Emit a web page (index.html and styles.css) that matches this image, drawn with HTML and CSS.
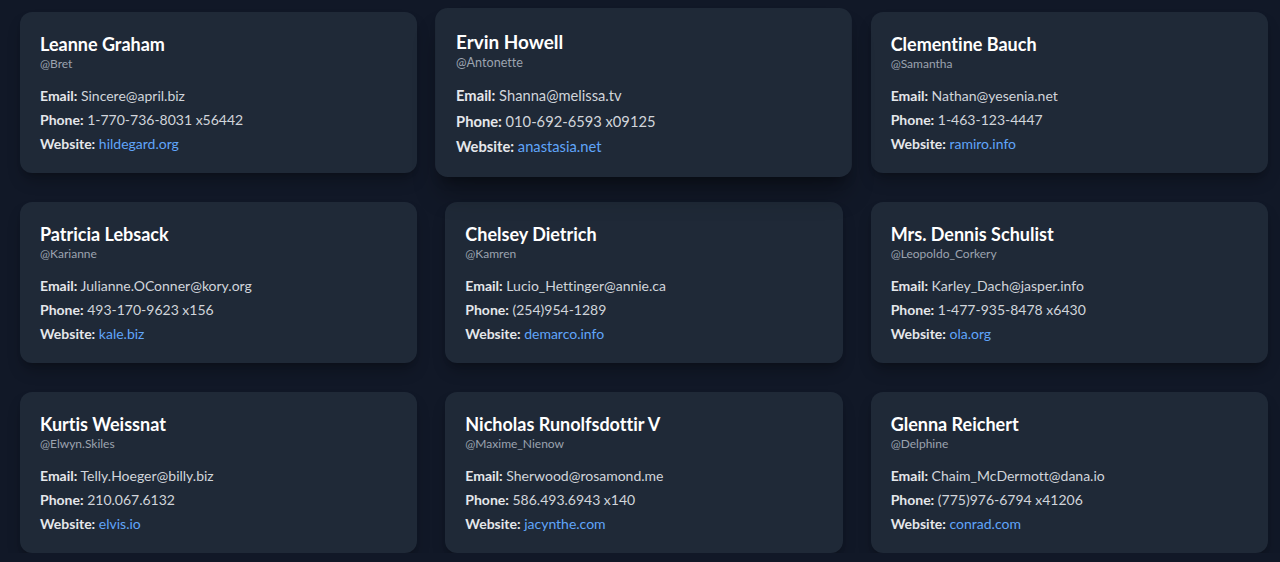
FILE: index.html
```html
<!DOCTYPE html>
<html lang="en">
<head>
<meta charset="utf-8">
<title>Users</title>
<link rel="stylesheet" href="styles.css">
</head>
<body>
<main class="grid">
  <article class="card">
    <h2 class="name">Leanne Graham</h2>
    <p class="user">@Bret</p>
    <div class="info">
      <p><b>Email:</b> Sincere@april.biz</p>
      <p><b>Phone:</b> 1-770-736-8031 x56442</p>
      <p><b>Website:</b> <a href="#">hildegard.org</a></p>
    </div>
  </article>
  <article class="card hovered">
    <h2 class="name">Ervin Howell</h2>
    <p class="user">@Antonette</p>
    <div class="info">
      <p><b>Email:</b> Shanna@melissa.tv</p>
      <p><b>Phone:</b> 010-692-6593 x09125</p>
      <p><b>Website:</b> <a href="#">anastasia.net</a></p>
    </div>
  </article>
  <article class="card">
    <h2 class="name">Clementine Bauch</h2>
    <p class="user">@Samantha</p>
    <div class="info">
      <p><b>Email:</b> Nathan@yesenia.net</p>
      <p><b>Phone:</b> 1-463-123-4447</p>
      <p><b>Website:</b> <a href="#">ramiro.info</a></p>
    </div>
  </article>
  <article class="card">
    <h2 class="name">Patricia Lebsack</h2>
    <p class="user">@Karianne</p>
    <div class="info">
      <p><b>Email:</b> Julianne.OConner@kory.org</p>
      <p><b>Phone:</b> 493-170-9623 x156</p>
      <p><b>Website:</b> <a href="#">kale.biz</a></p>
    </div>
  </article>
  <article class="card">
    <h2 class="name">Chelsey Dietrich</h2>
    <p class="user">@Kamren</p>
    <div class="info">
      <p><b>Email:</b> Lucio_Hettinger@annie.ca</p>
      <p><b>Phone:</b> (254)954-1289</p>
      <p><b>Website:</b> <a href="#">demarco.info</a></p>
    </div>
  </article>
  <article class="card">
    <h2 class="name">Mrs. Dennis Schulist</h2>
    <p class="user">@Leopoldo_Corkery</p>
    <div class="info">
      <p><b>Email:</b> Karley_Dach@jasper.info</p>
      <p><b>Phone:</b> 1-477-935-8478 x6430</p>
      <p><b>Website:</b> <a href="#">ola.org</a></p>
    </div>
  </article>
  <article class="card">
    <h2 class="name">Kurtis Weissnat</h2>
    <p class="user">@Elwyn.Skiles</p>
    <div class="info">
      <p><b>Email:</b> Telly.Hoeger@billy.biz</p>
      <p><b>Phone:</b> 210.067.6132</p>
      <p><b>Website:</b> <a href="#">elvis.io</a></p>
    </div>
  </article>
  <article class="card">
    <h2 class="name">Nicholas Runolfsdottir V</h2>
    <p class="user">@Maxime_Nienow</p>
    <div class="info">
      <p><b>Email:</b> Sherwood@rosamond.me</p>
      <p><b>Phone:</b> 586.493.6943 x140</p>
      <p><b>Website:</b> <a href="#">jacynthe.com</a></p>
    </div>
  </article>
  <article class="card">
    <h2 class="name">Glenna Reichert</h2>
    <p class="user">@Delphine</p>
    <div class="info">
      <p><b>Email:</b> Chaim_McDermott@dana.io</p>
      <p><b>Phone:</b> (775)976-6794 x41206</p>
      <p><b>Website:</b> <a href="#">conrad.com</a></p>
    </div>
  </article>
</main>
</body>
</html>
```
FILE: styles.css
```css
html, body {
  margin: 0;
  padding: 0;
  background: #111827;
  overflow: hidden;
}
body {
  font-family: "Lato", "Noto Sans", sans-serif;
  font-variant-ligatures: no-common-ligatures;
  color: #d1d5db;
}
.grid {
  display: grid;
  grid-template-columns: repeat(3, 1fr);
  column-gap: 28px;
  row-gap: 29px;
  width: 1248px;
  padding: 12px 0 0 20px;
}
.card {
  background: #1f2937;
  border-radius: 12px;
  padding: 20px 20px 17px;
  box-shadow: 0 10px 15px -3px rgba(0,0,0,0.25), 0 4px 6px -4px rgba(0,0,0,0.25);
}
.hovered {
  transform: scale(1.05);
  box-shadow: 0 20px 25px -5px rgba(0,0,0,0.3), 0 8px 10px -6px rgba(0,0,0,0.3);
}
.name {
  margin: 0;
  font-size: 18px;
  line-height: 24px;
  font-weight: 700;
  color: #ffffff;
}
.user {
  margin: 0;
  font-size: 12px;
  line-height: 16px;
  color: #9ca3af;
}
.info {
  margin-top: 12px;
}
.info p {
  margin: 0;
  font-size: 14px;
  line-height: 24px;
}
.info b {
  font-weight: 700;
  color: #e5e7eb;
}
.info a {
  color: #60a5fa;
  text-decoration: none;
}
```
